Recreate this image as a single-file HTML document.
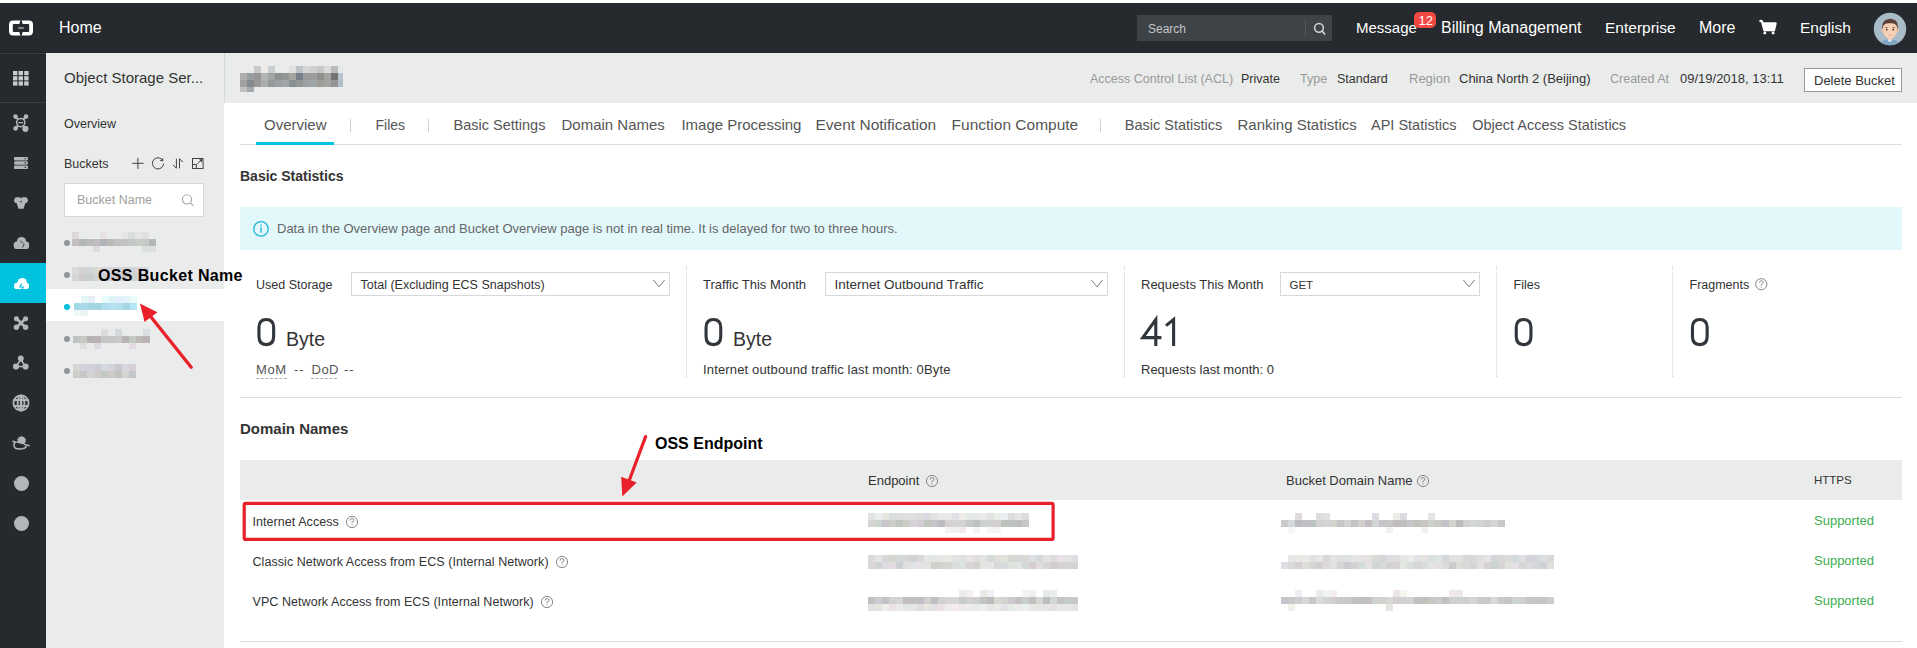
<!DOCTYPE html>
<html><head><meta charset="utf-8"><style>
*{box-sizing:border-box;margin:0;padding:0}
html,body{width:1917px;height:648px;overflow:hidden;background:#fff;font-family:"Liberation Sans",sans-serif;color:#333}
.abs{position:absolute}
.t{position:absolute;white-space:nowrap;line-height:1}
svg{position:absolute;overflow:visible}
</style></head><body>
<div class="abs" style="left:0px;top:3px;width:1917px;height:50px;background:#262a2e;"></div>
<div class="abs" style="left:0px;top:53px;width:46px;height:595px;background:#262a2e;"></div>
<div class="abs" style="left:0px;top:102px;width:46px;height:1px;background:#393e42;"></div>
<div class="abs" style="left:0px;top:53px;width:46px;height:1px;background:#393e42;"></div>
<div class="abs" style="left:0px;top:52px;width:46px;height:1px;background:#212529;"></div>
<div class="abs" style="left:46px;top:53px;width:178px;height:595px;background:#eaeceb;"></div>
<div class="abs" style="left:224px;top:53px;width:1px;height:50px;background:#d5d8d8;"></div>
<div class="abs" style="left:225px;top:53px;width:1692px;height:50px;background:#eaeceb;"></div>
<svg style="left:0;top:0" width="46" height="53"><g fill="#fff">
<path d="M20.4 20.5H13.2Q9 20.5 9 24.7V31.3Q9 35.5 13.2 35.5H20.4L19.3 32H13.6Q12.8 32 12.8 31.2V24.8Q12.8 24 13.6 24H19.3Z"/>
<path d="M21.6 20.5H28.8Q33 20.5 33 24.7V31.3Q33 35.5 28.8 35.5H21.6L22.7 32H28.4Q29.2 32 29.2 31.2V24.8Q29.2 24 28.4 24H22.7Z"/>
</g><rect x="18.2" y="27.1" width="5.6" height="1.8" fill="#8d9296"/></svg>
<div class="t" style="left:59px;top:20px;font-size:16px;color:#fff;">Home</div>
<div class="abs" style="left:1137px;top:15px;width:195px;height:26px;background:#3e4347;"></div>
<div class="abs" style="left:1305px;top:20px;width:1px;height:16px;background:#55595c;"></div>
<div class="t" style="left:1148px;top:23px;font-size:12px;color:#c3c6c8;">Search</div>
<svg style="left:1311px;top:20px" width="16" height="16"><circle cx="8" cy="7.8" r="4.4" fill="none" stroke="#d4d6d8" stroke-width="1.5"/><path d="M11.2 11L13.6 14" stroke="#d4d6d8" stroke-width="1.7" stroke-linecap="round"/></svg>
<div class="t" style="left:1356px;top:20px;font-size:15px;color:#fff;">Message</div>
<div class="abs" style="left:1414px;top:12px;width:22px;height:16px;background:#f14844;border-radius:5px;"></div>
<div class="t" style="left:1418.5px;top:14px;font-size:13px;color:#fff;">12</div>
<div class="t" style="left:1441px;top:20px;font-size:16px;color:#fff;">Billing Management</div>
<div class="t" style="left:1605px;top:20px;font-size:15.5px;color:#fff;">Enterprise</div>
<div class="t" style="left:1699px;top:20px;font-size:16px;color:#fff;">More</div>
<svg style="left:1758px;top:19px" width="20" height="17"><path d="M1.5 1.6L4 2.4L6.4 11.2H16L17.6 4.4H5.2" fill="none" stroke="#fff" stroke-width="2.2" stroke-linejoin="round"/><path d="M5 4.5H17.6L16 10.8H6.5Z" fill="#fff"/><rect x="5.5" y="12.6" width="2.6" height="2.6" fill="#fff"/><rect x="13.8" y="12.6" width="2.6" height="2.6" fill="#fff"/></svg>
<div class="t" style="left:1800px;top:20px;font-size:15.5px;color:#fff;">English</div>
<svg style="left:1873px;top:12px" width="34" height="34" viewBox="0 0 34 34">
<defs><clipPath id="av"><circle cx="17" cy="17" r="16.2"/></clipPath></defs>
<circle cx="17" cy="17" r="16.2" fill="#a7bcc7"/>
<g clip-path="url(#av)">
<path d="M7 34Q8 27.5 17 27Q26 27.5 27 34Z" fill="#7fa5c2"/>
<rect x="14.8" y="23" width="4.4" height="5" fill="#f2c7ad"/>
<path d="M15 27.3L17 28.8L19 27.3V28.6L17 30L15 28.6Z" fill="#fff"/>
<ellipse cx="17" cy="17.5" rx="7.4" ry="9.2" fill="#f5cfb6"/>
<ellipse cx="9.6" cy="18.5" rx="1.3" ry="2" fill="#f0c1a5"/><ellipse cx="24.4" cy="18.5" rx="1.3" ry="2" fill="#f0c1a5"/>
<path d="M9.3 18Q8.6 8.5 14 7.6Q17 6 20.5 7.4Q25.6 8.6 24.7 18L23.6 13.6Q21.5 10.6 17 11.3Q12.5 10.6 10.4 13.6Z" fill="#5b4037"/>
<rect x="13" y="16.8" width="1.4" height="1.7" rx=".6" fill="#3d2b26"/><rect x="19.6" y="16.8" width="1.4" height="1.7" rx=".6" fill="#3d2b26"/>
<path d="M12.2 15.3L14.8 15.9M21.8 15.3L19.2 15.9" stroke="#6a4d42" stroke-width=".8"/>
<path d="M15.8 23.4H18.2" stroke="#d9a48c" stroke-width=".7"/>
</g></svg>
<svg style="left:0;top:53px" width="46" height="50"><rect x="13.0" y="18.0" width="4.4" height="4.2" fill="#c9ccce"/><rect x="18.6" y="18.0" width="4.4" height="4.2" fill="#c9ccce"/><rect x="24.2" y="18.0" width="4.4" height="4.2" fill="#c9ccce"/><rect x="13.0" y="23.2" width="4.4" height="4.2" fill="#c9ccce"/><rect x="18.6" y="23.2" width="4.4" height="4.2" fill="#c9ccce"/><rect x="24.2" y="23.2" width="4.4" height="4.2" fill="#c9ccce"/><rect x="13.0" y="28.4" width="4.4" height="4.2" fill="#c9ccce"/><rect x="18.6" y="28.4" width="4.4" height="4.2" fill="#c9ccce"/><rect x="24.2" y="28.4" width="4.4" height="4.2" fill="#c9ccce"/></svg>
<svg style="left:0;top:103px" width="46" height="40"><g fill="#b3b6b8" stroke="#b3b6b8">
<path d="M15.5 13.5L26 27M26 13.5L16 25" stroke-width="2" fill="none"/>
<circle cx="15.5" cy="13.6" r="2.3" stroke="none"/><circle cx="26" cy="13.6" r="2.3" stroke="none"/><circle cx="15.6" cy="25.4" r="2.3" stroke="none"/><circle cx="25.4" cy="25.8" r="3.1" stroke="none"/>
<circle cx="20.7" cy="19.6" r="4.1" fill="#262a2e" stroke-width="1.5"/><rect x="18.4" y="19" width="4.6" height="1.3" stroke="none"/>
</g></svg>
<svg style="left:0;top:143px" width="46" height="40"><g fill="#b3b6b8">
<rect x="14" y="14" width="14" height="3.4" rx="1"/><rect x="14" y="18.3" width="14" height="3.4" rx="1.6"/><rect x="14" y="22.6" width="14" height="3.4" rx="1"/>
</g><g fill="#262a2e"><rect x="24.5" y="15.2" width="1.6" height="1"/><rect x="24.5" y="19.5" width="1.6" height="1"/><rect x="24.5" y="23.8" width="1.6" height="1"/></g></svg>
<svg style="left:0;top:183px" width="46" height="40"><g fill="#b3b6b8">
<path d="M15.6 14.2H19.6L21 15.3L22.4 14.2H26.4L28.2 17.2L26.8 20H25.4L23.6 25.8H18.4L16.6 20H15.2L13.8 17.2Z"/></g>
<circle cx="21" cy="18.6" r=".8" fill="#262a2e"/></svg>
<svg style="left:0;top:223px" width="46" height="40"><g fill="#b3b6b8">
<circle cx="17.2" cy="22" r="3.6"/><circle cx="21.5" cy="18.6" r="4.6"/><circle cx="25.8" cy="22" r="3.4"/><rect x="14" y="21.5" width="15" height="4.5" rx="2"/>
</g><path d="M20 17.5L24 21.5L22.5 24.5" stroke="#262a2e" stroke-width=".8" fill="none"/></svg>
<div class="abs" style="left:0px;top:263px;width:46px;height:40px;background:#00c1de;"></div>
<svg style="left:0;top:263px" width="46" height="40"><g fill="#fff">
<circle cx="17.5" cy="22.8" r="3.4"/><circle cx="22.2" cy="19.6" r="4.6"/><circle cx="25.8" cy="22.6" r="3.2"/><rect x="14.2" y="22" width="14.8" height="4.1" rx="2"/>
</g><path d="M21.6 20.4L19.8 24H23.4L21.4 27" stroke="#00c1de" stroke-width="1.1" fill="none"/></svg>
<svg style="left:0;top:303px" width="46" height="40"><g fill="#b3b6b8">
<path d="M16.5 15.5L25.5 24.5M25.5 15.5L16.5 24.5" stroke="#b3b6b8" stroke-width="2.6"/>
<circle cx="16.4" cy="15.8" r="2.5"/><circle cx="25.6" cy="15.8" r="2.5"/><circle cx="16.4" cy="24.3" r="2.7"/><circle cx="25.6" cy="24.3" r="2.7"/><rect x="19" y="18" width="4" height="4"/>
</g></svg>
<svg style="left:0;top:343px" width="46" height="40"><g fill="#b3b6b8">
<circle cx="20.8" cy="15.5" r="2.9"/><circle cx="16" cy="23.5" r="3.1"/><circle cx="25.6" cy="23.5" r="3.1"/>
<path d="M20.8 16.5L16.5 23M20.8 16.5L25 23M16 23.5H25.6" stroke="#b3b6b8" stroke-width="1.6"/>
</g><circle cx="20.8" cy="21" r="1.4" fill="#262a2e"/></svg>
<svg style="left:0;top:383px" width="46" height="40"><g fill="none" stroke="#b3b6b8" stroke-width="1.8">
<circle cx="21" cy="20" r="7.6"/><path d="M13.5 17H28.5M13.5 23H28.5"/><ellipse cx="21" cy="20" rx="3.4" ry="7.6"/></g>
<rect x="19.8" y="13" width="2.4" height="14" fill="#b3b6b8"/></svg>
<svg style="left:0;top:423px" width="46" height="40">
<path d="M21.60 12.70L22.74 14.08L24.48 13.64L24.59 15.43L26.26 16.09L25.30 17.60L26.26 19.11L24.59 19.77L24.48 21.56L22.74 21.12L21.60 22.50L20.46 21.12L18.72 21.56L18.61 19.77L16.94 19.11L17.90 17.60L16.94 16.09L18.61 15.43L18.72 13.64L20.46 14.08Z" fill="#b3b6b8"/>
<path d="M12.4 18.3L29.6 22.7" stroke="#b3b6b8" stroke-width="1.5"/>
<path d="M15.4 19.2Q13.4 20.6 14.2 23.4Q15.2 26.2 18.6 25.8Q20.2 26.4 22.2 25.6Q25.6 25.6 26.4 23" fill="none" stroke="#b3b6b8" stroke-width="1.5"/>
<path d="M16 19.6L24.2 21.6L23.5 24.5H17Z" fill="#262a2e"/>
</svg>
<div class="abs" style="left:13.5px;top:475.5px;width:15px;height:15px;border-radius:50%;background:#b3b6b8"></div>
<div class="abs" style="left:13.5px;top:515.5px;width:15px;height:15px;border-radius:50%;background:#b3b6b8"></div>
<div class="t" style="left:64px;top:70px;font-size:15px;color:#333;">Object Storage Ser...</div>
<div class="t" style="left:64px;top:118px;font-size:12.5px;color:#333;">Overview</div>
<div class="t" style="left:64px;top:158px;font-size:12.5px;color:#333;">Buckets</div>
<svg style="left:130px;top:155px" width="80" height="18"><g fill="none" stroke="#444" stroke-width="1">
<path d="M7.9 2.8V13.9M2.2 8.3H13.6"/>
<path d="M31.4 3.9A5.6 5.6 0 1 0 33.6 8.6"/>
<path d="M46.4 3.6V13.2L43 10M49.5 13.3V3.8L53 7"/>
<rect x="62.5" y="3.5" width="10.6" height="10"/><rect x="62.5" y="9.5" width="3.8" height="4"/><path d="M67.3 8.8L71.6 4.8"/>
</g><path d="M29.8 5.9L33.2 2.8V6.3Z" fill="#444"/><path d="M72.4 4L69 4.6L71.8 7.4Z" fill="#444"/></svg>
<div class="abs" style="left:64px;top:183px;width:140px;height:34px;background:#fff;border:1px solid #d9d9d9"></div>
<div class="t" style="left:77px;top:194px;font-size:12.5px;color:#a0a0a0;">Bucket Name</div>
<svg style="left:180px;top:192px" width="16" height="16"><circle cx="7" cy="7.4" r="4.6" fill="none" stroke="#a6a6a6" stroke-width="1.1"/><path d="M10.4 10.8L13.4 13.8" stroke="#a6a6a6" stroke-width="1.2"/></svg>
<div class="abs" style="left:46px;top:289px;width:178px;height:32px;background:#fff;"></div>
<div class="abs" style="left:64px;top:240px;width:6px;height:6px;border-radius:50%;background:#8f9598"></div>
<div class="abs" style="left:64px;top:272px;width:6px;height:6px;border-radius:50%;background:#8f9598"></div>
<div class="abs" style="left:64px;top:304px;width:6px;height:6px;border-radius:50%;background:#00c1de"></div>
<div class="abs" style="left:64px;top:336px;width:6px;height:6px;border-radius:50%;background:#8f9598"></div>
<div class="abs" style="left:64px;top:368px;width:6px;height:6px;border-radius:50%;background:#8f9598"></div>
<div class="abs" style="left:72px;top:232px;width:7px;height:7px;background:rgb(221,215,218)"></div>
<div class="abs" style="left:100px;top:232px;width:7px;height:7px;background:rgb(231,225,224)"></div>
<div class="abs" style="left:121px;top:232px;width:7px;height:7px;background:rgb(231,228,232)"></div>
<div class="abs" style="left:128px;top:232px;width:7px;height:7px;background:rgb(216,220,221)"></div>
<div class="abs" style="left:135px;top:232px;width:7px;height:7px;background:rgb(231,230,229)"></div>
<div class="abs" style="left:142px;top:232px;width:7px;height:7px;background:rgb(222,223,222)"></div>
<div class="abs" style="left:72px;top:239px;width:7px;height:7px;background:rgb(196,190,191)"></div>
<div class="abs" style="left:79px;top:239px;width:7px;height:7px;background:rgb(179,183,179)"></div>
<div class="abs" style="left:86px;top:239px;width:7px;height:7px;background:rgb(189,188,188)"></div>
<div class="abs" style="left:93px;top:239px;width:7px;height:7px;background:rgb(193,188,191)"></div>
<div class="abs" style="left:100px;top:239px;width:7px;height:7px;background:rgb(177,179,184)"></div>
<div class="abs" style="left:107px;top:239px;width:7px;height:7px;background:rgb(184,186,184)"></div>
<div class="abs" style="left:114px;top:239px;width:7px;height:7px;background:rgb(195,193,192)"></div>
<div class="abs" style="left:121px;top:239px;width:7px;height:7px;background:rgb(197,194,196)"></div>
<div class="abs" style="left:128px;top:239px;width:7px;height:7px;background:rgb(195,199,197)"></div>
<div class="abs" style="left:135px;top:239px;width:7px;height:7px;background:rgb(201,204,197)"></div>
<div class="abs" style="left:142px;top:239px;width:7px;height:7px;background:rgb(199,200,200)"></div>
<div class="abs" style="left:149px;top:239px;width:7px;height:7px;background:rgb(178,184,184)"></div>
<div class="abs" style="left:93px;top:246px;width:7px;height:6px;background:rgb(222,218,223)"></div>
<div class="abs" style="left:142px;top:246px;width:7px;height:6px;background:rgb(218,222,224)"></div>
<div class="abs" style="left:149px;top:246px;width:7px;height:6px;background:rgb(223,222,222)"></div>
<div class="abs" style="left:72px;top:267px;width:7px;height:7px;background:rgb(219,220,223)"></div>
<div class="abs" style="left:79px;top:267px;width:7px;height:7px;background:rgb(213,209,206)"></div>
<div class="abs" style="left:86px;top:267px;width:7px;height:7px;background:rgb(209,213,215)"></div>
<div class="abs" style="left:93px;top:267px;width:7px;height:7px;background:rgb(215,217,210)"></div>
<div class="abs" style="left:100px;top:267px;width:7px;height:7px;background:rgb(218,215,218)"></div>
<div class="abs" style="left:107px;top:267px;width:7px;height:7px;background:rgb(216,214,218)"></div>
<div class="abs" style="left:114px;top:267px;width:7px;height:7px;background:rgb(209,210,215)"></div>
<div class="abs" style="left:121px;top:267px;width:7px;height:7px;background:rgb(210,208,208)"></div>
<div class="abs" style="left:128px;top:267px;width:7px;height:7px;background:rgb(212,211,211)"></div>
<div class="abs" style="left:135px;top:267px;width:7px;height:7px;background:rgb(215,213,218)"></div>
<div class="abs" style="left:142px;top:267px;width:7px;height:7px;background:rgb(219,218,219)"></div>
<div class="abs" style="left:72px;top:274px;width:7px;height:7px;background:rgb(216,214,210)"></div>
<div class="abs" style="left:79px;top:274px;width:7px;height:7px;background:rgb(207,203,203)"></div>
<div class="abs" style="left:86px;top:274px;width:7px;height:7px;background:rgb(201,205,204)"></div>
<div class="abs" style="left:93px;top:274px;width:7px;height:7px;background:rgb(209,214,210)"></div>
<div class="abs" style="left:100px;top:274px;width:7px;height:7px;background:rgb(205,204,207)"></div>
<div class="abs" style="left:107px;top:274px;width:7px;height:7px;background:rgb(212,209,214)"></div>
<div class="abs" style="left:114px;top:274px;width:7px;height:7px;background:rgb(205,203,207)"></div>
<div class="abs" style="left:121px;top:274px;width:7px;height:7px;background:rgb(201,202,196)"></div>
<div class="abs" style="left:128px;top:274px;width:7px;height:7px;background:rgb(210,209,210)"></div>
<div class="abs" style="left:135px;top:274px;width:7px;height:7px;background:rgb(205,212,205)"></div>
<div class="abs" style="left:142px;top:274px;width:7px;height:7px;background:rgb(209,210,208)"></div>
<div class="abs" style="left:81px;top:296px;width:7px;height:7px;background:rgb(229,247,245)"></div>
<div class="abs" style="left:88px;top:296px;width:7px;height:7px;background:rgb(231,238,246)"></div>
<div class="abs" style="left:102px;top:296px;width:7px;height:7px;background:rgb(231,253,252)"></div>
<div class="abs" style="left:109px;top:296px;width:7px;height:7px;background:rgb(223,242,246)"></div>
<div class="abs" style="left:116px;top:296px;width:7px;height:7px;background:rgb(226,238,249)"></div>
<div class="abs" style="left:123px;top:296px;width:7px;height:7px;background:rgb(228,243,249)"></div>
<div class="abs" style="left:130px;top:296px;width:7px;height:7px;background:rgb(232,252,250)"></div>
<div class="abs" style="left:74px;top:303px;width:7px;height:7px;background:rgb(165,219,229)"></div>
<div class="abs" style="left:81px;top:303px;width:7px;height:7px;background:rgb(173,215,237)"></div>
<div class="abs" style="left:88px;top:303px;width:7px;height:7px;background:rgb(165,215,225)"></div>
<div class="abs" style="left:95px;top:303px;width:7px;height:7px;background:rgb(164,212,224)"></div>
<div class="abs" style="left:102px;top:303px;width:7px;height:7px;background:rgb(176,221,240)"></div>
<div class="abs" style="left:109px;top:303px;width:7px;height:7px;background:rgb(181,225,240)"></div>
<div class="abs" style="left:116px;top:303px;width:7px;height:7px;background:rgb(179,223,238)"></div>
<div class="abs" style="left:123px;top:303px;width:7px;height:7px;background:rgb(167,214,228)"></div>
<div class="abs" style="left:130px;top:303px;width:7px;height:7px;background:rgb(180,230,245)"></div>
<div class="abs" style="left:74px;top:310px;width:7px;height:6px;background:rgb(240,247,247)"></div>
<div class="abs" style="left:81px;top:310px;width:7px;height:6px;background:rgb(237,245,244)"></div>
<div class="abs" style="left:101px;top:329px;width:7px;height:7px;background:rgb(222,221,219)"></div>
<div class="abs" style="left:115px;top:329px;width:7px;height:7px;background:rgb(212,217,220)"></div>
<div class="abs" style="left:143px;top:329px;width:7px;height:7px;background:rgb(218,222,225)"></div>
<div class="abs" style="left:73px;top:336px;width:7px;height:7px;background:rgb(191,197,193)"></div>
<div class="abs" style="left:80px;top:336px;width:7px;height:7px;background:rgb(201,200,196)"></div>
<div class="abs" style="left:87px;top:336px;width:7px;height:7px;background:rgb(180,177,178)"></div>
<div class="abs" style="left:94px;top:336px;width:7px;height:7px;background:rgb(184,177,182)"></div>
<div class="abs" style="left:101px;top:336px;width:7px;height:7px;background:rgb(196,199,198)"></div>
<div class="abs" style="left:108px;top:336px;width:7px;height:7px;background:rgb(196,199,194)"></div>
<div class="abs" style="left:115px;top:336px;width:7px;height:7px;background:rgb(200,199,202)"></div>
<div class="abs" style="left:122px;top:336px;width:7px;height:7px;background:rgb(185,180,183)"></div>
<div class="abs" style="left:129px;top:336px;width:7px;height:7px;background:rgb(194,200,194)"></div>
<div class="abs" style="left:136px;top:336px;width:7px;height:7px;background:rgb(191,186,184)"></div>
<div class="abs" style="left:143px;top:336px;width:7px;height:7px;background:rgb(185,180,179)"></div>
<div class="abs" style="left:80px;top:343px;width:7px;height:6px;background:rgb(222,222,224)"></div>
<div class="abs" style="left:94px;top:343px;width:7px;height:6px;background:rgb(219,220,226)"></div>
<div class="abs" style="left:129px;top:343px;width:7px;height:6px;background:rgb(226,219,225)"></div>
<div class="abs" style="left:73px;top:364px;width:7px;height:7px;background:rgb(215,214,214)"></div>
<div class="abs" style="left:80px;top:364px;width:7px;height:7px;background:rgb(211,210,216)"></div>
<div class="abs" style="left:87px;top:364px;width:7px;height:7px;background:rgb(209,208,214)"></div>
<div class="abs" style="left:94px;top:364px;width:7px;height:7px;background:rgb(206,205,212)"></div>
<div class="abs" style="left:101px;top:364px;width:7px;height:7px;background:rgb(212,218,219)"></div>
<div class="abs" style="left:108px;top:364px;width:7px;height:7px;background:rgb(212,210,218)"></div>
<div class="abs" style="left:115px;top:364px;width:7px;height:7px;background:rgb(201,201,204)"></div>
<div class="abs" style="left:122px;top:364px;width:7px;height:7px;background:rgb(217,214,221)"></div>
<div class="abs" style="left:129px;top:364px;width:7px;height:7px;background:rgb(212,208,213)"></div>
<div class="abs" style="left:73px;top:371px;width:7px;height:7px;background:rgb(203,206,199)"></div>
<div class="abs" style="left:80px;top:371px;width:7px;height:7px;background:rgb(201,198,200)"></div>
<div class="abs" style="left:87px;top:371px;width:7px;height:7px;background:rgb(210,213,214)"></div>
<div class="abs" style="left:94px;top:371px;width:7px;height:7px;background:rgb(207,203,199)"></div>
<div class="abs" style="left:101px;top:371px;width:7px;height:7px;background:rgb(195,200,195)"></div>
<div class="abs" style="left:108px;top:371px;width:7px;height:7px;background:rgb(207,202,201)"></div>
<div class="abs" style="left:115px;top:371px;width:7px;height:7px;background:rgb(195,195,192)"></div>
<div class="abs" style="left:122px;top:371px;width:7px;height:7px;background:rgb(213,213,213)"></div>
<div class="abs" style="left:129px;top:371px;width:7px;height:7px;background:rgb(197,198,199)"></div>
<div class="abs" style="left:254px;top:66px;width:7px;height:7px;background:#c9c9cc;"></div>
<div class="abs" style="left:261px;top:66px;width:7px;height:7px;background:#ecebe8;"></div>
<div class="abs" style="left:268px;top:66px;width:7px;height:7px;background:#c9ced1;"></div>
<div class="abs" style="left:289px;top:66px;width:7px;height:7px;background:#e2e1e0;"></div>
<div class="abs" style="left:296px;top:66px;width:7px;height:7px;background:#bcc2c5;"></div>
<div class="abs" style="left:303px;top:66px;width:7px;height:7px;background:#d8d7d4;"></div>
<div class="abs" style="left:310px;top:66px;width:7px;height:7px;background:#ccd0d3;"></div>
<div class="abs" style="left:317px;top:66px;width:7px;height:7px;background:#c9c8c6;"></div>
<div class="abs" style="left:324px;top:66px;width:7px;height:7px;background:#d8dcde;"></div>
<div class="abs" style="left:331px;top:66px;width:7px;height:7px;background:#bcbcba;"></div>
<div class="abs" style="left:338px;top:66px;width:5px;height:7px;background:#e6e9ec;"></div>
<div class="abs" style="left:240px;top:73px;width:7px;height:7px;background:#aeadab;"></div>
<div class="abs" style="left:247px;top:73px;width:7px;height:7px;background:#969fa2;"></div>
<div class="abs" style="left:254px;top:73px;width:7px;height:7px;background:#9a9697;"></div>
<div class="abs" style="left:261px;top:73px;width:7px;height:7px;background:#b3b5b2;"></div>
<div class="abs" style="left:268px;top:73px;width:7px;height:7px;background:#a3a6a7;"></div>
<div class="abs" style="left:275px;top:73px;width:7px;height:7px;background:#8e9192;"></div>
<div class="abs" style="left:282px;top:73px;width:7px;height:7px;background:#939697;"></div>
<div class="abs" style="left:289px;top:73px;width:7px;height:7px;background:#a3a5a0;"></div>
<div class="abs" style="left:296px;top:73px;width:7px;height:7px;background:#76808a;"></div>
<div class="abs" style="left:303px;top:73px;width:7px;height:7px;background:#9a9b9d;"></div>
<div class="abs" style="left:310px;top:73px;width:7px;height:7px;background:#9a9d9c;"></div>
<div class="abs" style="left:317px;top:73px;width:7px;height:7px;background:#908f8c;"></div>
<div class="abs" style="left:324px;top:73px;width:7px;height:7px;background:#a2a3a1;"></div>
<div class="abs" style="left:331px;top:73px;width:7px;height:7px;background:#727471;"></div>
<div class="abs" style="left:338px;top:73px;width:5px;height:7px;background:#b8c5ce;"></div>
<div class="abs" style="left:240px;top:80px;width:7px;height:7px;background:#a3a2a1;"></div>
<div class="abs" style="left:247px;top:80px;width:7px;height:7px;background:#828b90;"></div>
<div class="abs" style="left:254px;top:80px;width:7px;height:7px;background:#9e9999;"></div>
<div class="abs" style="left:261px;top:80px;width:7px;height:7px;background:#acaeab;"></div>
<div class="abs" style="left:268px;top:80px;width:7px;height:7px;background:#949899;"></div>
<div class="abs" style="left:275px;top:80px;width:7px;height:7px;background:#9ea1a3;"></div>
<div class="abs" style="left:282px;top:80px;width:7px;height:7px;background:#a3a6a6;"></div>
<div class="abs" style="left:289px;top:80px;width:7px;height:7px;background:#899094;"></div>
<div class="abs" style="left:296px;top:80px;width:7px;height:7px;background:#949899;"></div>
<div class="abs" style="left:303px;top:80px;width:7px;height:7px;background:#9fa2a2;"></div>
<div class="abs" style="left:310px;top:80px;width:7px;height:7px;background:#a0a5a8;"></div>
<div class="abs" style="left:317px;top:80px;width:7px;height:7px;background:#9f9e9b;"></div>
<div class="abs" style="left:324px;top:80px;width:7px;height:7px;background:#a5a4a2;"></div>
<div class="abs" style="left:331px;top:80px;width:7px;height:7px;background:#949594;"></div>
<div class="abs" style="left:338px;top:80px;width:5px;height:7px;background:#afbec8;"></div>
<div class="abs" style="left:240px;top:87px;width:7px;height:5px;background:#c1c1be;"></div>
<div class="abs" style="left:247px;top:87px;width:7px;height:5px;background:#a4a9ad;"></div>
<div class="t" style="left:1090px;top:73px;font-size:12.5px;color:#999;">Access Control List (ACL)</div>
<div class="t" style="left:1241px;top:73px;font-size:12.5px;color:#333;">Private</div>
<div class="t" style="left:1300px;top:73px;font-size:12.5px;color:#999;">Type</div>
<div class="t" style="left:1337px;top:73px;font-size:12.5px;color:#333;">Standard</div>
<div class="t" style="left:1409px;top:72px;font-size:13px;color:#999;">Region</div>
<div class="t" style="left:1459px;top:72px;font-size:13px;color:#333;">China North 2 (Beijing)</div>
<div class="t" style="left:1610px;top:73px;font-size:12.5px;color:#999;">Created At</div>
<div class="t" style="left:1680px;top:72px;font-size:13px;color:#333;">09/19/2018, 13:11</div>
<div class="abs" style="left:1804px;top:68px;width:98px;height:24px;background:#fff;border:1px solid #999"></div>
<div class="t" style="left:1814px;top:74px;font-size:13px;color:#333;">Delete Bucket</div>
<div class="abs" style="left:240px;top:144px;width:1662px;height:1px;background:#dcdcdc;"></div>
<div class="abs" style="left:256px;top:142px;width:78px;height:3px;background:#00c1de;"></div>
<div class="t" style="left:264px;top:117px;font-size:15px;color:#555;">Overview</div>
<div class="abs" style="left:350px;top:119px;width:1px;height:13px;background:#d0d0d0;"></div>
<div class="t" style="left:375.5px;top:118px;font-size:14px;color:#555;">Files</div>
<div class="abs" style="left:428px;top:119px;width:1px;height:13px;background:#d0d0d0;"></div>
<div class="t" style="left:453.5px;top:118px;font-size:14.5px;color:#555;">Basic Settings</div>
<div class="t" style="left:561.5px;top:117px;font-size:15px;color:#555;">Domain Names</div>
<div class="t" style="left:681.4px;top:117px;font-size:15px;color:#555;">Image Processing</div>
<div class="t" style="left:815.5px;top:117px;font-size:15.5px;color:#555;">Event Notification</div>
<div class="t" style="left:951.6px;top:117px;font-size:15.5px;color:#555;">Function Compute</div>
<div class="abs" style="left:1100px;top:119px;width:1px;height:13px;background:#d0d0d0;"></div>
<div class="t" style="left:1124.8px;top:118px;font-size:14.5px;color:#555;">Basic Statistics</div>
<div class="t" style="left:1237.5px;top:117px;font-size:15px;color:#555;">Ranking Statistics</div>
<div class="t" style="left:1371px;top:118px;font-size:14.5px;color:#555;">API Statistics</div>
<div class="t" style="left:1472.2px;top:118px;font-size:14.5px;color:#555;">Object Access Statistics</div>
<div class="t" style="left:240px;top:169px;font-size:14px;color:#333;font-weight:bold;">Basic Statistics</div>
<div class="abs" style="left:240px;top:207px;width:1662px;height:43px;background:#e3f8fb;"></div>
<svg style="left:252px;top:220px" width="18" height="18"><circle cx="9" cy="8.9" r="7.2" fill="none" stroke="#1fb3dc" stroke-width="1.3"/><rect x="8.3" y="7.3" width="1.4" height="5.3" fill="#1fb3dc"/><rect x="8.3" y="4.6" width="1.4" height="1.5" fill="#1fb3dc"/></svg>
<div class="t" style="left:277px;top:222px;font-size:13px;color:#666;">Data in the Overview page and Bucket Overview page is not in real time. It is delayed for two to three hours.</div>
<div class="t" style="left:256px;top:279px;font-size:12.5px;color:#333;">Used Storage</div>
<div class="abs" style="left:351px;top:272px;width:319px;height:24px;background:#fff;border:1px solid #d6d9db"></div>
<div class="t" style="left:360.5px;top:279px;font-size:12.5px;color:#333;">Total (Excluding ECS Snapshots)</div>
<svg style="left:651px;top:279px" width="16" height="10"><path d="M2.4 1L8 7.8L13.6 1" fill="none" stroke="#7a7a7a" stroke-width="1"/></svg>
<svg style="left:0;top:0" width="1917" height="648"><path d="M258.95 327.60C258.95 321.50 261.90 319.55 266.30 319.55C270.70 319.55 273.65 321.50 273.65 327.60V336.60C273.65 342.70 270.70 344.65 266.30 344.65C261.90 344.65 258.95 342.70 258.95 336.60Z" fill="none" stroke="#30363b" stroke-width="3.1"/></svg>
<div class="t" style="left:286px;top:330px;font-size:19.5px;color:#333;">Byte</div>
<div class="t" style="left:256px;top:363px;font-size:13px;color:#555;letter-spacing:.6px;">MoM</div>
<div class="abs" style="left:256px;top:378px;width:31px;height:0;border-top:1px dashed #b0b0b0"></div>
<div class="t" style="left:294px;top:363px;font-size:13px;color:#555;letter-spacing:1px;">--</div>
<div class="t" style="left:311.5px;top:363px;font-size:13px;color:#555;letter-spacing:.5px;">DoD</div>
<div class="abs" style="left:311px;top:378px;width:26px;height:0;border-top:1px dashed #b0b0b0"></div>
<div class="t" style="left:344px;top:363px;font-size:13px;color:#555;letter-spacing:1px;">--</div>
<div class="abs" style="left:686px;top:266px;width:0;height:111px;border-left:1px dotted #d2d2d2"></div>
<div class="t" style="left:703px;top:278px;font-size:13px;color:#333;">Traffic This Month</div>
<div class="abs" style="left:825px;top:272px;width:283px;height:24px;background:#fff;border:1px solid #d6d9db"></div>
<div class="t" style="left:834.5px;top:278px;font-size:13.5px;color:#333;">Internet Outbound Traffic</div>
<svg style="left:1089px;top:279px" width="16" height="10"><path d="M2.4 1L8 7.8L13.6 1" fill="none" stroke="#7a7a7a" stroke-width="1"/></svg>
<svg style="left:0;top:0" width="1917" height="648"><path d="M706.05 327.60C706.05 321.50 709.00 319.55 713.40 319.55C717.80 319.55 720.75 321.50 720.75 327.60V336.60C720.75 342.70 717.80 344.65 713.40 344.65C709.00 344.65 706.05 342.70 706.05 336.60Z" fill="none" stroke="#30363b" stroke-width="3.1"/></svg>
<div class="t" style="left:733px;top:330px;font-size:19.5px;color:#333;">Byte</div>
<div class="t" style="left:703px;top:363px;font-size:13px;color:#333;letter-spacing:.15px;">Internet outbound traffic last month: 0Byte</div>
<div class="abs" style="left:1124px;top:266px;width:0;height:111px;border-left:1px dotted #d2d2d2"></div>
<div class="t" style="left:1141px;top:278px;font-size:13px;color:#333;">Requests This Month</div>
<div class="abs" style="left:1280px;top:272px;width:200px;height:24px;background:#fff;border:1px solid #d6d9db"></div>
<div class="t" style="left:1289.5px;top:280px;font-size:11.5px;color:#333;">GET</div>
<svg style="left:1461px;top:279px" width="16" height="10"><path d="M2.4 1L8 7.8L13.6 1" fill="none" stroke="#7a7a7a" stroke-width="1"/></svg>
<svg style="left:0;top:0" width="1917" height="648"><g fill="none" stroke="#30363b" stroke-width="3.1"><path d="M1155.8 346V319.5L1142.8 337.6H1161.4"/><path d="M1173.6 346V319.5L1166 325.6"/></g></svg>
<div class="t" style="left:1141px;top:363px;font-size:13px;color:#333;">Requests last month: 0</div>
<div class="abs" style="left:1496px;top:266px;width:0;height:111px;border-left:1px dotted #d2d2d2"></div>
<div class="t" style="left:1513.5px;top:279px;font-size:12.5px;color:#333;">Files</div>
<svg style="left:0;top:0" width="1917" height="648"><path d="M1516.25 327.60C1516.25 321.50 1519.20 319.55 1523.60 319.55C1528.00 319.55 1530.95 321.50 1530.95 327.60V336.60C1530.95 342.70 1528.00 344.65 1523.60 344.65C1519.20 344.65 1516.25 342.70 1516.25 336.60Z" fill="none" stroke="#30363b" stroke-width="3.1"/></svg>
<div class="abs" style="left:1672px;top:266px;width:0;height:111px;border-left:1px dotted #d2d2d2"></div>
<div class="t" style="left:1689.5px;top:279px;font-size:12.5px;color:#333;">Fragments</div>
<svg style="left:1754px;top:277px" width="14" height="14"><circle cx="7.3" cy="7.2" r="5.6" fill="none" stroke="#888" stroke-width="1"/><path d="M5.4 5.7Q5.5 3.8 7.3 3.8Q9.2 3.8 9.2 5.5Q9.2 6.7 7.3 7.4V8.6" fill="none" stroke="#888" stroke-width="1"/><rect x="6.8" y="9.6" width="1" height="1.1" fill="#888"/></svg>
<svg style="left:0;top:0" width="1917" height="648"><path d="M1692.45 327.60C1692.45 321.50 1695.40 319.55 1699.80 319.55C1704.20 319.55 1707.15 321.50 1707.15 327.60V336.60C1707.15 342.70 1704.20 344.65 1699.80 344.65C1695.40 344.65 1692.45 342.70 1692.45 336.60Z" fill="none" stroke="#30363b" stroke-width="3.1"/></svg>
<div class="abs" style="left:240px;top:397px;width:1662px;height:1px;background:#dcdcdc;"></div>
<div class="t" style="left:240px;top:421px;font-size:15px;color:#333;font-weight:bold;">Domain Names</div>
<div class="abs" style="left:240px;top:460px;width:1662px;height:40px;background:#eaeceb;"></div>
<div class="t" style="left:868px;top:474px;font-size:13px;color:#333;">Endpoint</div>
<svg style="left:925px;top:473.5px" width="14" height="14"><circle cx="7" cy="7" r="5.6" fill="none" stroke="#888" stroke-width="1"/><path d="M5.1 5.5Q5.2 3.6 7 3.6Q8.9 3.6 8.9 5.3Q8.9 6.5 7 7.2V8.4" fill="none" stroke="#888" stroke-width="1"/><rect x="6.5" y="9.4" width="1" height="1.1" fill="#888"/></svg>
<div class="t" style="left:1286px;top:474px;font-size:13px;color:#333;">Bucket Domain Name</div>
<svg style="left:1416px;top:473.5px" width="14" height="14"><circle cx="7" cy="7" r="5.6" fill="none" stroke="#888" stroke-width="1"/><path d="M5.1 5.5Q5.2 3.6 7 3.6Q8.9 3.6 8.9 5.3Q8.9 6.5 7 7.2V8.4" fill="none" stroke="#888" stroke-width="1"/><rect x="6.5" y="9.4" width="1" height="1.1" fill="#888"/></svg>
<div class="t" style="left:1814px;top:475px;font-size:11.5px;color:#333;">HTTPS</div>
<div class="t" style="left:252.5px;top:516px;font-size:12.5px;color:#333;letter-spacing:.06px;">Internet Access</div>
<svg style="left:345px;top:514.6px" width="14" height="14"><circle cx="7" cy="7" r="5.6" fill="none" stroke="#888" stroke-width="1"/><path d="M5.1 5.5Q5.2 3.6 7 3.6Q8.9 3.6 8.9 5.3Q8.9 6.5 7 7.2V8.4" fill="none" stroke="#888" stroke-width="1"/><rect x="6.5" y="9.4" width="1" height="1.1" fill="#888"/></svg>
<div class="t" style="left:1814px;top:514px;font-size:13px;color:#3dae4e;">Supported</div>
<div class="t" style="left:252.5px;top:556px;font-size:12.5px;color:#333;letter-spacing:.06px;">Classic Network Access from ECS (Internal Network)</div>
<svg style="left:555px;top:554.6px" width="14" height="14"><circle cx="7" cy="7" r="5.6" fill="none" stroke="#888" stroke-width="1"/><path d="M5.1 5.5Q5.2 3.6 7 3.6Q8.9 3.6 8.9 5.3Q8.9 6.5 7 7.2V8.4" fill="none" stroke="#888" stroke-width="1"/><rect x="6.5" y="9.4" width="1" height="1.1" fill="#888"/></svg>
<div class="t" style="left:1814px;top:554px;font-size:13px;color:#3dae4e;">Supported</div>
<div class="t" style="left:252.5px;top:596px;font-size:12.5px;color:#333;letter-spacing:.06px;">VPC Network Access from ECS (Internal Network)</div>
<svg style="left:540px;top:594.6px" width="14" height="14"><circle cx="7" cy="7" r="5.6" fill="none" stroke="#888" stroke-width="1"/><path d="M5.1 5.5Q5.2 3.6 7 3.6Q8.9 3.6 8.9 5.3Q8.9 6.5 7 7.2V8.4" fill="none" stroke="#888" stroke-width="1"/><rect x="6.5" y="9.4" width="1" height="1.1" fill="#888"/></svg>
<div class="t" style="left:1814px;top:594px;font-size:13px;color:#3dae4e;">Supported</div>
<div class="abs" style="left:868px;top:513px;width:7px;height:7px;background:rgb(227,227,225)"></div>
<div class="abs" style="left:875px;top:513px;width:7px;height:7px;background:rgb(234,238,239)"></div>
<div class="abs" style="left:882px;top:513px;width:7px;height:7px;background:rgb(229,229,224)"></div>
<div class="abs" style="left:889px;top:513px;width:7px;height:7px;background:rgb(216,221,222)"></div>
<div class="abs" style="left:896px;top:513px;width:7px;height:7px;background:rgb(220,221,221)"></div>
<div class="abs" style="left:903px;top:513px;width:7px;height:7px;background:rgb(223,223,224)"></div>
<div class="abs" style="left:910px;top:513px;width:7px;height:7px;background:rgb(222,225,224)"></div>
<div class="abs" style="left:917px;top:513px;width:7px;height:7px;background:rgb(224,219,221)"></div>
<div class="abs" style="left:924px;top:513px;width:7px;height:7px;background:rgb(219,218,225)"></div>
<div class="abs" style="left:931px;top:513px;width:7px;height:7px;background:rgb(229,226,227)"></div>
<div class="abs" style="left:938px;top:513px;width:7px;height:7px;background:rgb(233,233,231)"></div>
<div class="abs" style="left:945px;top:513px;width:7px;height:7px;background:rgb(234,232,234)"></div>
<div class="abs" style="left:952px;top:513px;width:7px;height:7px;background:rgb(223,223,230)"></div>
<div class="abs" style="left:959px;top:513px;width:7px;height:7px;background:rgb(239,237,234)"></div>
<div class="abs" style="left:966px;top:513px;width:7px;height:7px;background:rgb(228,234,232)"></div>
<div class="abs" style="left:973px;top:513px;width:7px;height:7px;background:rgb(230,232,233)"></div>
<div class="abs" style="left:980px;top:513px;width:7px;height:7px;background:rgb(233,235,234)"></div>
<div class="abs" style="left:987px;top:513px;width:7px;height:7px;background:rgb(224,225,226)"></div>
<div class="abs" style="left:994px;top:513px;width:7px;height:7px;background:rgb(231,238,232)"></div>
<div class="abs" style="left:1001px;top:513px;width:7px;height:7px;background:rgb(235,237,240)"></div>
<div class="abs" style="left:1008px;top:513px;width:7px;height:7px;background:rgb(221,221,224)"></div>
<div class="abs" style="left:1015px;top:513px;width:7px;height:7px;background:rgb(231,230,229)"></div>
<div class="abs" style="left:1022px;top:513px;width:7px;height:7px;background:rgb(221,220,221)"></div>
<div class="abs" style="left:868px;top:520px;width:7px;height:7px;background:rgb(214,213,210)"></div>
<div class="abs" style="left:875px;top:520px;width:7px;height:7px;background:rgb(205,213,208)"></div>
<div class="abs" style="left:882px;top:520px;width:7px;height:7px;background:rgb(199,197,202)"></div>
<div class="abs" style="left:889px;top:520px;width:7px;height:7px;background:rgb(207,205,202)"></div>
<div class="abs" style="left:896px;top:520px;width:7px;height:7px;background:rgb(193,199,192)"></div>
<div class="abs" style="left:903px;top:520px;width:7px;height:7px;background:rgb(204,205,198)"></div>
<div class="abs" style="left:910px;top:520px;width:7px;height:7px;background:rgb(214,210,214)"></div>
<div class="abs" style="left:917px;top:520px;width:7px;height:7px;background:rgb(209,205,211)"></div>
<div class="abs" style="left:924px;top:520px;width:7px;height:7px;background:rgb(193,197,192)"></div>
<div class="abs" style="left:931px;top:520px;width:7px;height:7px;background:rgb(196,196,201)"></div>
<div class="abs" style="left:938px;top:520px;width:7px;height:7px;background:rgb(189,187,193)"></div>
<div class="abs" style="left:945px;top:520px;width:7px;height:7px;background:rgb(214,207,210)"></div>
<div class="abs" style="left:952px;top:520px;width:7px;height:7px;background:rgb(215,212,215)"></div>
<div class="abs" style="left:959px;top:520px;width:7px;height:7px;background:rgb(209,210,210)"></div>
<div class="abs" style="left:966px;top:520px;width:7px;height:7px;background:rgb(195,201,197)"></div>
<div class="abs" style="left:973px;top:520px;width:7px;height:7px;background:rgb(188,194,190)"></div>
<div class="abs" style="left:980px;top:520px;width:7px;height:7px;background:rgb(206,210,211)"></div>
<div class="abs" style="left:987px;top:520px;width:7px;height:7px;background:rgb(207,210,208)"></div>
<div class="abs" style="left:994px;top:520px;width:7px;height:7px;background:rgb(211,207,207)"></div>
<div class="abs" style="left:1001px;top:520px;width:7px;height:7px;background:rgb(189,194,189)"></div>
<div class="abs" style="left:1008px;top:520px;width:7px;height:7px;background:rgb(189,196,191)"></div>
<div class="abs" style="left:1015px;top:520px;width:7px;height:7px;background:rgb(187,190,188)"></div>
<div class="abs" style="left:1022px;top:520px;width:7px;height:7px;background:rgb(201,198,199)"></div>
<div class="abs" style="left:945px;top:527px;width:7px;height:6px;background:rgb(244,243,243)"></div>
<div class="abs" style="left:952px;top:527px;width:7px;height:6px;background:rgb(242,239,244)"></div>
<div class="abs" style="left:959px;top:527px;width:7px;height:6px;background:rgb(242,234,234)"></div>
<div class="abs" style="left:973px;top:527px;width:7px;height:6px;background:rgb(247,241,246)"></div>
<div class="abs" style="left:987px;top:527px;width:7px;height:6px;background:rgb(245,246,247)"></div>
<div class="abs" style="left:994px;top:527px;width:7px;height:6px;background:rgb(248,243,246)"></div>
<div class="abs" style="left:868px;top:555px;width:7px;height:7px;background:rgb(218,217,221)"></div>
<div class="abs" style="left:875px;top:555px;width:7px;height:7px;background:rgb(227,229,226)"></div>
<div class="abs" style="left:882px;top:555px;width:7px;height:7px;background:rgb(215,216,219)"></div>
<div class="abs" style="left:889px;top:555px;width:7px;height:7px;background:rgb(211,215,208)"></div>
<div class="abs" style="left:896px;top:555px;width:7px;height:7px;background:rgb(212,218,217)"></div>
<div class="abs" style="left:903px;top:555px;width:7px;height:7px;background:rgb(216,214,213)"></div>
<div class="abs" style="left:910px;top:555px;width:7px;height:7px;background:rgb(212,209,214)"></div>
<div class="abs" style="left:917px;top:555px;width:7px;height:7px;background:rgb(216,218,218)"></div>
<div class="abs" style="left:924px;top:555px;width:7px;height:7px;background:rgb(230,231,227)"></div>
<div class="abs" style="left:931px;top:555px;width:7px;height:7px;background:rgb(225,230,230)"></div>
<div class="abs" style="left:938px;top:555px;width:7px;height:7px;background:rgb(230,230,230)"></div>
<div class="abs" style="left:945px;top:555px;width:7px;height:7px;background:rgb(230,233,228)"></div>
<div class="abs" style="left:952px;top:555px;width:7px;height:7px;background:rgb(227,227,227)"></div>
<div class="abs" style="left:959px;top:555px;width:7px;height:7px;background:rgb(221,225,225)"></div>
<div class="abs" style="left:966px;top:555px;width:7px;height:7px;background:rgb(231,227,231)"></div>
<div class="abs" style="left:973px;top:555px;width:7px;height:7px;background:rgb(225,221,224)"></div>
<div class="abs" style="left:980px;top:555px;width:7px;height:7px;background:rgb(228,229,227)"></div>
<div class="abs" style="left:987px;top:555px;width:7px;height:7px;background:rgb(212,218,214)"></div>
<div class="abs" style="left:994px;top:555px;width:7px;height:7px;background:rgb(226,220,219)"></div>
<div class="abs" style="left:1001px;top:555px;width:7px;height:7px;background:rgb(222,227,220)"></div>
<div class="abs" style="left:1008px;top:555px;width:7px;height:7px;background:rgb(215,215,209)"></div>
<div class="abs" style="left:1015px;top:555px;width:7px;height:7px;background:rgb(216,213,216)"></div>
<div class="abs" style="left:1022px;top:555px;width:7px;height:7px;background:rgb(217,216,210)"></div>
<div class="abs" style="left:1029px;top:555px;width:7px;height:7px;background:rgb(219,225,226)"></div>
<div class="abs" style="left:1036px;top:555px;width:7px;height:7px;background:rgb(214,215,218)"></div>
<div class="abs" style="left:1043px;top:555px;width:7px;height:7px;background:rgb(230,225,229)"></div>
<div class="abs" style="left:1050px;top:555px;width:7px;height:7px;background:rgb(220,218,218)"></div>
<div class="abs" style="left:1057px;top:555px;width:7px;height:7px;background:rgb(233,227,233)"></div>
<div class="abs" style="left:1064px;top:555px;width:7px;height:7px;background:rgb(228,229,226)"></div>
<div class="abs" style="left:1071px;top:555px;width:7px;height:7px;background:rgb(223,221,228)"></div>
<div class="abs" style="left:868px;top:562px;width:7px;height:7px;background:rgb(218,214,218)"></div>
<div class="abs" style="left:875px;top:562px;width:7px;height:7px;background:rgb(207,212,208)"></div>
<div class="abs" style="left:882px;top:562px;width:7px;height:7px;background:rgb(221,219,223)"></div>
<div class="abs" style="left:889px;top:562px;width:7px;height:7px;background:rgb(229,221,225)"></div>
<div class="abs" style="left:896px;top:562px;width:7px;height:7px;background:rgb(205,207,210)"></div>
<div class="abs" style="left:903px;top:562px;width:7px;height:7px;background:rgb(225,222,221)"></div>
<div class="abs" style="left:910px;top:562px;width:7px;height:7px;background:rgb(224,228,231)"></div>
<div class="abs" style="left:917px;top:562px;width:7px;height:7px;background:rgb(232,225,227)"></div>
<div class="abs" style="left:924px;top:562px;width:7px;height:7px;background:rgb(226,226,223)"></div>
<div class="abs" style="left:931px;top:562px;width:7px;height:7px;background:rgb(207,208,202)"></div>
<div class="abs" style="left:938px;top:562px;width:7px;height:7px;background:rgb(212,209,206)"></div>
<div class="abs" style="left:945px;top:562px;width:7px;height:7px;background:rgb(214,213,208)"></div>
<div class="abs" style="left:952px;top:562px;width:7px;height:7px;background:rgb(219,222,223)"></div>
<div class="abs" style="left:959px;top:562px;width:7px;height:7px;background:rgb(221,227,227)"></div>
<div class="abs" style="left:966px;top:562px;width:7px;height:7px;background:rgb(215,212,214)"></div>
<div class="abs" style="left:973px;top:562px;width:7px;height:7px;background:rgb(210,209,203)"></div>
<div class="abs" style="left:980px;top:562px;width:7px;height:7px;background:rgb(230,229,227)"></div>
<div class="abs" style="left:987px;top:562px;width:7px;height:7px;background:rgb(228,229,228)"></div>
<div class="abs" style="left:994px;top:562px;width:7px;height:7px;background:rgb(215,216,213)"></div>
<div class="abs" style="left:1001px;top:562px;width:7px;height:7px;background:rgb(214,220,221)"></div>
<div class="abs" style="left:1008px;top:562px;width:7px;height:7px;background:rgb(223,227,223)"></div>
<div class="abs" style="left:1015px;top:562px;width:7px;height:7px;background:rgb(225,230,227)"></div>
<div class="abs" style="left:1022px;top:562px;width:7px;height:7px;background:rgb(212,218,215)"></div>
<div class="abs" style="left:1029px;top:562px;width:7px;height:7px;background:rgb(212,206,209)"></div>
<div class="abs" style="left:1036px;top:562px;width:7px;height:7px;background:rgb(227,220,220)"></div>
<div class="abs" style="left:1043px;top:562px;width:7px;height:7px;background:rgb(211,213,217)"></div>
<div class="abs" style="left:1050px;top:562px;width:7px;height:7px;background:rgb(209,204,207)"></div>
<div class="abs" style="left:1057px;top:562px;width:7px;height:7px;background:rgb(213,210,209)"></div>
<div class="abs" style="left:1064px;top:562px;width:7px;height:7px;background:rgb(215,213,212)"></div>
<div class="abs" style="left:1071px;top:562px;width:7px;height:7px;background:rgb(212,213,211)"></div>
<div class="abs" style="left:959px;top:590px;width:7px;height:7px;background:rgb(234,237,238)"></div>
<div class="abs" style="left:966px;top:590px;width:7px;height:7px;background:rgb(245,238,242)"></div>
<div class="abs" style="left:980px;top:590px;width:7px;height:7px;background:rgb(232,234,229)"></div>
<div class="abs" style="left:987px;top:590px;width:7px;height:7px;background:rgb(238,240,245)"></div>
<div class="abs" style="left:1022px;top:590px;width:7px;height:7px;background:rgb(245,242,248)"></div>
<div class="abs" style="left:1029px;top:590px;width:7px;height:7px;background:rgb(241,240,241)"></div>
<div class="abs" style="left:1043px;top:590px;width:7px;height:7px;background:rgb(230,234,235)"></div>
<div class="abs" style="left:1050px;top:590px;width:7px;height:7px;background:rgb(236,235,240)"></div>
<div class="abs" style="left:868px;top:597px;width:7px;height:7px;background:rgb(189,194,189)"></div>
<div class="abs" style="left:875px;top:597px;width:7px;height:7px;background:rgb(204,202,210)"></div>
<div class="abs" style="left:882px;top:597px;width:7px;height:7px;background:rgb(192,194,197)"></div>
<div class="abs" style="left:889px;top:597px;width:7px;height:7px;background:rgb(210,209,210)"></div>
<div class="abs" style="left:896px;top:597px;width:7px;height:7px;background:rgb(213,212,212)"></div>
<div class="abs" style="left:903px;top:597px;width:7px;height:7px;background:rgb(194,191,189)"></div>
<div class="abs" style="left:910px;top:597px;width:7px;height:7px;background:rgb(193,193,194)"></div>
<div class="abs" style="left:917px;top:597px;width:7px;height:7px;background:rgb(193,189,192)"></div>
<div class="abs" style="left:924px;top:597px;width:7px;height:7px;background:rgb(210,206,207)"></div>
<div class="abs" style="left:931px;top:597px;width:7px;height:7px;background:rgb(190,192,191)"></div>
<div class="abs" style="left:938px;top:597px;width:7px;height:7px;background:rgb(208,209,208)"></div>
<div class="abs" style="left:945px;top:597px;width:7px;height:7px;background:rgb(215,213,212)"></div>
<div class="abs" style="left:952px;top:597px;width:7px;height:7px;background:rgb(214,214,213)"></div>
<div class="abs" style="left:959px;top:597px;width:7px;height:7px;background:rgb(201,202,204)"></div>
<div class="abs" style="left:966px;top:597px;width:7px;height:7px;background:rgb(208,208,207)"></div>
<div class="abs" style="left:973px;top:597px;width:7px;height:7px;background:rgb(206,205,208)"></div>
<div class="abs" style="left:980px;top:597px;width:7px;height:7px;background:rgb(193,195,194)"></div>
<div class="abs" style="left:987px;top:597px;width:7px;height:7px;background:rgb(189,186,188)"></div>
<div class="abs" style="left:994px;top:597px;width:7px;height:7px;background:rgb(213,217,210)"></div>
<div class="abs" style="left:1001px;top:597px;width:7px;height:7px;background:rgb(213,209,209)"></div>
<div class="abs" style="left:1008px;top:597px;width:7px;height:7px;background:rgb(204,202,206)"></div>
<div class="abs" style="left:1015px;top:597px;width:7px;height:7px;background:rgb(196,192,192)"></div>
<div class="abs" style="left:1022px;top:597px;width:7px;height:7px;background:rgb(201,207,204)"></div>
<div class="abs" style="left:1029px;top:597px;width:7px;height:7px;background:rgb(194,191,191)"></div>
<div class="abs" style="left:1036px;top:597px;width:7px;height:7px;background:rgb(211,216,210)"></div>
<div class="abs" style="left:1043px;top:597px;width:7px;height:7px;background:rgb(189,188,193)"></div>
<div class="abs" style="left:1050px;top:597px;width:7px;height:7px;background:rgb(210,216,211)"></div>
<div class="abs" style="left:1057px;top:597px;width:7px;height:7px;background:rgb(195,195,195)"></div>
<div class="abs" style="left:1064px;top:597px;width:7px;height:7px;background:rgb(195,202,199)"></div>
<div class="abs" style="left:1071px;top:597px;width:7px;height:7px;background:rgb(201,201,201)"></div>
<div class="abs" style="left:868px;top:604px;width:7px;height:7px;background:rgb(224,226,228)"></div>
<div class="abs" style="left:875px;top:604px;width:7px;height:7px;background:rgb(230,226,222)"></div>
<div class="abs" style="left:882px;top:604px;width:7px;height:7px;background:rgb(240,237,238)"></div>
<div class="abs" style="left:889px;top:604px;width:7px;height:7px;background:rgb(234,227,230)"></div>
<div class="abs" style="left:896px;top:604px;width:7px;height:7px;background:rgb(236,234,237)"></div>
<div class="abs" style="left:903px;top:604px;width:7px;height:7px;background:rgb(226,229,227)"></div>
<div class="abs" style="left:910px;top:604px;width:7px;height:7px;background:rgb(228,231,232)"></div>
<div class="abs" style="left:917px;top:604px;width:7px;height:7px;background:rgb(226,223,224)"></div>
<div class="abs" style="left:924px;top:604px;width:7px;height:7px;background:rgb(230,232,224)"></div>
<div class="abs" style="left:931px;top:604px;width:7px;height:7px;background:rgb(226,225,229)"></div>
<div class="abs" style="left:938px;top:604px;width:7px;height:7px;background:rgb(234,226,227)"></div>
<div class="abs" style="left:945px;top:604px;width:7px;height:7px;background:rgb(240,236,236)"></div>
<div class="abs" style="left:952px;top:604px;width:7px;height:7px;background:rgb(243,235,236)"></div>
<div class="abs" style="left:959px;top:604px;width:7px;height:7px;background:rgb(240,233,234)"></div>
<div class="abs" style="left:966px;top:604px;width:7px;height:7px;background:rgb(235,237,235)"></div>
<div class="abs" style="left:973px;top:604px;width:7px;height:7px;background:rgb(231,235,233)"></div>
<div class="abs" style="left:980px;top:604px;width:7px;height:7px;background:rgb(235,239,238)"></div>
<div class="abs" style="left:987px;top:604px;width:7px;height:7px;background:rgb(231,230,231)"></div>
<div class="abs" style="left:994px;top:604px;width:7px;height:7px;background:rgb(234,234,234)"></div>
<div class="abs" style="left:1001px;top:604px;width:7px;height:7px;background:rgb(227,226,233)"></div>
<div class="abs" style="left:1008px;top:604px;width:7px;height:7px;background:rgb(229,235,229)"></div>
<div class="abs" style="left:1015px;top:604px;width:7px;height:7px;background:rgb(234,237,233)"></div>
<div class="abs" style="left:1022px;top:604px;width:7px;height:7px;background:rgb(236,242,237)"></div>
<div class="abs" style="left:1029px;top:604px;width:7px;height:7px;background:rgb(233,232,229)"></div>
<div class="abs" style="left:1036px;top:604px;width:7px;height:7px;background:rgb(230,229,225)"></div>
<div class="abs" style="left:1043px;top:604px;width:7px;height:7px;background:rgb(229,231,228)"></div>
<div class="abs" style="left:1050px;top:604px;width:7px;height:7px;background:rgb(230,224,229)"></div>
<div class="abs" style="left:1057px;top:604px;width:7px;height:7px;background:rgb(232,232,234)"></div>
<div class="abs" style="left:1064px;top:604px;width:7px;height:7px;background:rgb(232,233,231)"></div>
<div class="abs" style="left:1071px;top:604px;width:7px;height:7px;background:rgb(225,227,229)"></div>
<div class="abs" style="left:1295px;top:513px;width:7px;height:7px;background:rgb(223,217,222)"></div>
<div class="abs" style="left:1316px;top:513px;width:7px;height:7px;background:rgb(220,222,221)"></div>
<div class="abs" style="left:1323px;top:513px;width:7px;height:7px;background:rgb(225,225,223)"></div>
<div class="abs" style="left:1372px;top:513px;width:7px;height:7px;background:rgb(219,220,225)"></div>
<div class="abs" style="left:1393px;top:513px;width:7px;height:7px;background:rgb(238,236,233)"></div>
<div class="abs" style="left:1400px;top:513px;width:7px;height:7px;background:rgb(219,218,224)"></div>
<div class="abs" style="left:1428px;top:513px;width:7px;height:7px;background:rgb(229,229,231)"></div>
<div class="abs" style="left:1281px;top:520px;width:7px;height:7px;background:rgb(203,201,201)"></div>
<div class="abs" style="left:1288px;top:520px;width:7px;height:7px;background:rgb(212,215,217)"></div>
<div class="abs" style="left:1295px;top:520px;width:7px;height:7px;background:rgb(187,189,192)"></div>
<div class="abs" style="left:1302px;top:520px;width:7px;height:7px;background:rgb(193,192,196)"></div>
<div class="abs" style="left:1309px;top:520px;width:7px;height:7px;background:rgb(187,194,193)"></div>
<div class="abs" style="left:1316px;top:520px;width:7px;height:7px;background:rgb(209,209,212)"></div>
<div class="abs" style="left:1323px;top:520px;width:7px;height:7px;background:rgb(214,212,214)"></div>
<div class="abs" style="left:1330px;top:520px;width:7px;height:7px;background:rgb(209,213,206)"></div>
<div class="abs" style="left:1337px;top:520px;width:7px;height:7px;background:rgb(199,198,199)"></div>
<div class="abs" style="left:1344px;top:520px;width:7px;height:7px;background:rgb(210,211,209)"></div>
<div class="abs" style="left:1351px;top:520px;width:7px;height:7px;background:rgb(193,196,194)"></div>
<div class="abs" style="left:1358px;top:520px;width:7px;height:7px;background:rgb(211,207,204)"></div>
<div class="abs" style="left:1365px;top:520px;width:7px;height:7px;background:rgb(194,191,196)"></div>
<div class="abs" style="left:1372px;top:520px;width:7px;height:7px;background:rgb(209,214,212)"></div>
<div class="abs" style="left:1379px;top:520px;width:7px;height:7px;background:rgb(198,196,202)"></div>
<div class="abs" style="left:1386px;top:520px;width:7px;height:7px;background:rgb(197,199,198)"></div>
<div class="abs" style="left:1393px;top:520px;width:7px;height:7px;background:rgb(195,188,191)"></div>
<div class="abs" style="left:1400px;top:520px;width:7px;height:7px;background:rgb(190,192,192)"></div>
<div class="abs" style="left:1407px;top:520px;width:7px;height:7px;background:rgb(198,198,203)"></div>
<div class="abs" style="left:1414px;top:520px;width:7px;height:7px;background:rgb(194,195,191)"></div>
<div class="abs" style="left:1421px;top:520px;width:7px;height:7px;background:rgb(204,197,198)"></div>
<div class="abs" style="left:1428px;top:520px;width:7px;height:7px;background:rgb(203,208,201)"></div>
<div class="abs" style="left:1435px;top:520px;width:7px;height:7px;background:rgb(201,201,199)"></div>
<div class="abs" style="left:1442px;top:520px;width:7px;height:7px;background:rgb(193,194,199)"></div>
<div class="abs" style="left:1449px;top:520px;width:7px;height:7px;background:rgb(208,211,206)"></div>
<div class="abs" style="left:1456px;top:520px;width:7px;height:7px;background:rgb(189,188,187)"></div>
<div class="abs" style="left:1463px;top:520px;width:7px;height:7px;background:rgb(208,208,209)"></div>
<div class="abs" style="left:1470px;top:520px;width:7px;height:7px;background:rgb(210,216,215)"></div>
<div class="abs" style="left:1477px;top:520px;width:7px;height:7px;background:rgb(211,211,211)"></div>
<div class="abs" style="left:1484px;top:520px;width:7px;height:7px;background:rgb(201,206,201)"></div>
<div class="abs" style="left:1491px;top:520px;width:7px;height:7px;background:rgb(215,212,215)"></div>
<div class="abs" style="left:1498px;top:520px;width:7px;height:7px;background:rgb(198,201,197)"></div>
<div class="abs" style="left:1288px;top:527px;width:7px;height:6px;background:rgb(247,245,246)"></div>
<div class="abs" style="left:1386px;top:527px;width:7px;height:6px;background:rgb(242,240,241)"></div>
<div class="abs" style="left:1421px;top:527px;width:7px;height:6px;background:rgb(243,242,243)"></div>
<div class="abs" style="left:1288px;top:555px;width:7px;height:7px;background:rgb(230,231,232)"></div>
<div class="abs" style="left:1295px;top:555px;width:7px;height:7px;background:rgb(233,233,227)"></div>
<div class="abs" style="left:1302px;top:555px;width:7px;height:7px;background:rgb(231,234,233)"></div>
<div class="abs" style="left:1309px;top:555px;width:7px;height:7px;background:rgb(228,225,228)"></div>
<div class="abs" style="left:1316px;top:555px;width:7px;height:7px;background:rgb(227,231,230)"></div>
<div class="abs" style="left:1323px;top:555px;width:7px;height:7px;background:rgb(217,215,216)"></div>
<div class="abs" style="left:1330px;top:555px;width:7px;height:7px;background:rgb(230,228,227)"></div>
<div class="abs" style="left:1337px;top:555px;width:7px;height:7px;background:rgb(224,223,221)"></div>
<div class="abs" style="left:1344px;top:555px;width:7px;height:7px;background:rgb(222,226,224)"></div>
<div class="abs" style="left:1351px;top:555px;width:7px;height:7px;background:rgb(230,231,226)"></div>
<div class="abs" style="left:1358px;top:555px;width:7px;height:7px;background:rgb(229,225,229)"></div>
<div class="abs" style="left:1365px;top:555px;width:7px;height:7px;background:rgb(228,224,223)"></div>
<div class="abs" style="left:1372px;top:555px;width:7px;height:7px;background:rgb(216,219,212)"></div>
<div class="abs" style="left:1379px;top:555px;width:7px;height:7px;background:rgb(214,213,213)"></div>
<div class="abs" style="left:1386px;top:555px;width:7px;height:7px;background:rgb(220,220,226)"></div>
<div class="abs" style="left:1393px;top:555px;width:7px;height:7px;background:rgb(223,221,221)"></div>
<div class="abs" style="left:1400px;top:555px;width:7px;height:7px;background:rgb(229,229,227)"></div>
<div class="abs" style="left:1407px;top:555px;width:7px;height:7px;background:rgb(236,235,232)"></div>
<div class="abs" style="left:1414px;top:555px;width:7px;height:7px;background:rgb(226,225,232)"></div>
<div class="abs" style="left:1421px;top:555px;width:7px;height:7px;background:rgb(228,227,223)"></div>
<div class="abs" style="left:1428px;top:555px;width:7px;height:7px;background:rgb(217,225,224)"></div>
<div class="abs" style="left:1435px;top:555px;width:7px;height:7px;background:rgb(222,227,227)"></div>
<div class="abs" style="left:1442px;top:555px;width:7px;height:7px;background:rgb(212,215,218)"></div>
<div class="abs" style="left:1449px;top:555px;width:7px;height:7px;background:rgb(224,226,224)"></div>
<div class="abs" style="left:1456px;top:555px;width:7px;height:7px;background:rgb(225,225,224)"></div>
<div class="abs" style="left:1463px;top:555px;width:7px;height:7px;background:rgb(216,215,215)"></div>
<div class="abs" style="left:1470px;top:555px;width:7px;height:7px;background:rgb(216,217,220)"></div>
<div class="abs" style="left:1477px;top:555px;width:7px;height:7px;background:rgb(221,224,225)"></div>
<div class="abs" style="left:1484px;top:555px;width:7px;height:7px;background:rgb(228,228,231)"></div>
<div class="abs" style="left:1491px;top:555px;width:7px;height:7px;background:rgb(211,214,218)"></div>
<div class="abs" style="left:1498px;top:555px;width:7px;height:7px;background:rgb(216,213,213)"></div>
<div class="abs" style="left:1505px;top:555px;width:7px;height:7px;background:rgb(219,219,217)"></div>
<div class="abs" style="left:1512px;top:555px;width:7px;height:7px;background:rgb(212,218,220)"></div>
<div class="abs" style="left:1519px;top:555px;width:7px;height:7px;background:rgb(221,223,227)"></div>
<div class="abs" style="left:1526px;top:555px;width:7px;height:7px;background:rgb(211,212,217)"></div>
<div class="abs" style="left:1533px;top:555px;width:7px;height:7px;background:rgb(211,214,219)"></div>
<div class="abs" style="left:1540px;top:555px;width:7px;height:7px;background:rgb(218,222,222)"></div>
<div class="abs" style="left:1547px;top:555px;width:7px;height:7px;background:rgb(219,216,212)"></div>
<div class="abs" style="left:1281px;top:562px;width:7px;height:7px;background:rgb(223,223,230)"></div>
<div class="abs" style="left:1288px;top:562px;width:7px;height:7px;background:rgb(216,216,219)"></div>
<div class="abs" style="left:1295px;top:562px;width:7px;height:7px;background:rgb(211,207,211)"></div>
<div class="abs" style="left:1302px;top:562px;width:7px;height:7px;background:rgb(221,221,218)"></div>
<div class="abs" style="left:1309px;top:562px;width:7px;height:7px;background:rgb(209,216,211)"></div>
<div class="abs" style="left:1316px;top:562px;width:7px;height:7px;background:rgb(210,207,208)"></div>
<div class="abs" style="left:1323px;top:562px;width:7px;height:7px;background:rgb(223,217,217)"></div>
<div class="abs" style="left:1330px;top:562px;width:7px;height:7px;background:rgb(225,224,224)"></div>
<div class="abs" style="left:1337px;top:562px;width:7px;height:7px;background:rgb(215,212,212)"></div>
<div class="abs" style="left:1344px;top:562px;width:7px;height:7px;background:rgb(203,204,207)"></div>
<div class="abs" style="left:1351px;top:562px;width:7px;height:7px;background:rgb(212,211,210)"></div>
<div class="abs" style="left:1358px;top:562px;width:7px;height:7px;background:rgb(211,218,218)"></div>
<div class="abs" style="left:1365px;top:562px;width:7px;height:7px;background:rgb(227,225,225)"></div>
<div class="abs" style="left:1372px;top:562px;width:7px;height:7px;background:rgb(209,213,211)"></div>
<div class="abs" style="left:1379px;top:562px;width:7px;height:7px;background:rgb(214,219,215)"></div>
<div class="abs" style="left:1386px;top:562px;width:7px;height:7px;background:rgb(208,211,210)"></div>
<div class="abs" style="left:1393px;top:562px;width:7px;height:7px;background:rgb(215,209,212)"></div>
<div class="abs" style="left:1400px;top:562px;width:7px;height:7px;background:rgb(225,231,225)"></div>
<div class="abs" style="left:1407px;top:562px;width:7px;height:7px;background:rgb(215,221,217)"></div>
<div class="abs" style="left:1414px;top:562px;width:7px;height:7px;background:rgb(214,212,212)"></div>
<div class="abs" style="left:1421px;top:562px;width:7px;height:7px;background:rgb(218,220,217)"></div>
<div class="abs" style="left:1428px;top:562px;width:7px;height:7px;background:rgb(226,227,227)"></div>
<div class="abs" style="left:1435px;top:562px;width:7px;height:7px;background:rgb(228,223,227)"></div>
<div class="abs" style="left:1442px;top:562px;width:7px;height:7px;background:rgb(218,220,219)"></div>
<div class="abs" style="left:1449px;top:562px;width:7px;height:7px;background:rgb(204,205,205)"></div>
<div class="abs" style="left:1456px;top:562px;width:7px;height:7px;background:rgb(219,221,216)"></div>
<div class="abs" style="left:1463px;top:562px;width:7px;height:7px;background:rgb(217,218,216)"></div>
<div class="abs" style="left:1470px;top:562px;width:7px;height:7px;background:rgb(214,212,208)"></div>
<div class="abs" style="left:1477px;top:562px;width:7px;height:7px;background:rgb(228,221,226)"></div>
<div class="abs" style="left:1484px;top:562px;width:7px;height:7px;background:rgb(213,212,211)"></div>
<div class="abs" style="left:1491px;top:562px;width:7px;height:7px;background:rgb(203,209,209)"></div>
<div class="abs" style="left:1498px;top:562px;width:7px;height:7px;background:rgb(216,212,210)"></div>
<div class="abs" style="left:1505px;top:562px;width:7px;height:7px;background:rgb(227,225,223)"></div>
<div class="abs" style="left:1512px;top:562px;width:7px;height:7px;background:rgb(228,224,227)"></div>
<div class="abs" style="left:1519px;top:562px;width:7px;height:7px;background:rgb(210,214,212)"></div>
<div class="abs" style="left:1526px;top:562px;width:7px;height:7px;background:rgb(221,217,221)"></div>
<div class="abs" style="left:1533px;top:562px;width:7px;height:7px;background:rgb(214,215,218)"></div>
<div class="abs" style="left:1540px;top:562px;width:7px;height:7px;background:rgb(206,207,209)"></div>
<div class="abs" style="left:1547px;top:562px;width:7px;height:7px;background:rgb(223,223,219)"></div>
<div class="abs" style="left:1295px;top:590px;width:7px;height:7px;background:rgb(241,238,241)"></div>
<div class="abs" style="left:1316px;top:590px;width:7px;height:7px;background:rgb(234,236,234)"></div>
<div class="abs" style="left:1323px;top:590px;width:7px;height:7px;background:rgb(237,245,241)"></div>
<div class="abs" style="left:1330px;top:590px;width:7px;height:7px;background:rgb(243,239,243)"></div>
<div class="abs" style="left:1393px;top:590px;width:7px;height:7px;background:rgb(236,228,229)"></div>
<div class="abs" style="left:1400px;top:590px;width:7px;height:7px;background:rgb(246,244,239)"></div>
<div class="abs" style="left:1449px;top:590px;width:7px;height:7px;background:rgb(240,233,233)"></div>
<div class="abs" style="left:1456px;top:590px;width:7px;height:7px;background:rgb(236,232,233)"></div>
<div class="abs" style="left:1281px;top:597px;width:7px;height:7px;background:rgb(198,197,203)"></div>
<div class="abs" style="left:1288px;top:597px;width:7px;height:7px;background:rgb(198,201,199)"></div>
<div class="abs" style="left:1295px;top:597px;width:7px;height:7px;background:rgb(205,206,212)"></div>
<div class="abs" style="left:1302px;top:597px;width:7px;height:7px;background:rgb(216,216,214)"></div>
<div class="abs" style="left:1309px;top:597px;width:7px;height:7px;background:rgb(204,198,202)"></div>
<div class="abs" style="left:1316px;top:597px;width:7px;height:7px;background:rgb(217,218,218)"></div>
<div class="abs" style="left:1323px;top:597px;width:7px;height:7px;background:rgb(210,211,215)"></div>
<div class="abs" style="left:1330px;top:597px;width:7px;height:7px;background:rgb(210,204,204)"></div>
<div class="abs" style="left:1337px;top:597px;width:7px;height:7px;background:rgb(204,201,205)"></div>
<div class="abs" style="left:1344px;top:597px;width:7px;height:7px;background:rgb(198,202,201)"></div>
<div class="abs" style="left:1351px;top:597px;width:7px;height:7px;background:rgb(195,193,194)"></div>
<div class="abs" style="left:1358px;top:597px;width:7px;height:7px;background:rgb(190,191,189)"></div>
<div class="abs" style="left:1365px;top:597px;width:7px;height:7px;background:rgb(197,190,197)"></div>
<div class="abs" style="left:1372px;top:597px;width:7px;height:7px;background:rgb(204,210,206)"></div>
<div class="abs" style="left:1379px;top:597px;width:7px;height:7px;background:rgb(210,209,203)"></div>
<div class="abs" style="left:1386px;top:597px;width:7px;height:7px;background:rgb(214,216,212)"></div>
<div class="abs" style="left:1393px;top:597px;width:7px;height:7px;background:rgb(211,205,208)"></div>
<div class="abs" style="left:1400px;top:597px;width:7px;height:7px;background:rgb(212,209,212)"></div>
<div class="abs" style="left:1407px;top:597px;width:7px;height:7px;background:rgb(208,212,215)"></div>
<div class="abs" style="left:1414px;top:597px;width:7px;height:7px;background:rgb(193,195,194)"></div>
<div class="abs" style="left:1421px;top:597px;width:7px;height:7px;background:rgb(193,193,187)"></div>
<div class="abs" style="left:1428px;top:597px;width:7px;height:7px;background:rgb(198,201,195)"></div>
<div class="abs" style="left:1435px;top:597px;width:7px;height:7px;background:rgb(201,203,204)"></div>
<div class="abs" style="left:1442px;top:597px;width:7px;height:7px;background:rgb(192,195,189)"></div>
<div class="abs" style="left:1449px;top:597px;width:7px;height:7px;background:rgb(204,206,207)"></div>
<div class="abs" style="left:1456px;top:597px;width:7px;height:7px;background:rgb(208,210,209)"></div>
<div class="abs" style="left:1463px;top:597px;width:7px;height:7px;background:rgb(206,209,202)"></div>
<div class="abs" style="left:1470px;top:597px;width:7px;height:7px;background:rgb(216,211,216)"></div>
<div class="abs" style="left:1477px;top:597px;width:7px;height:7px;background:rgb(203,202,203)"></div>
<div class="abs" style="left:1484px;top:597px;width:7px;height:7px;background:rgb(201,202,201)"></div>
<div class="abs" style="left:1491px;top:597px;width:7px;height:7px;background:rgb(217,217,215)"></div>
<div class="abs" style="left:1498px;top:597px;width:7px;height:7px;background:rgb(203,202,207)"></div>
<div class="abs" style="left:1505px;top:597px;width:7px;height:7px;background:rgb(196,197,192)"></div>
<div class="abs" style="left:1512px;top:597px;width:7px;height:7px;background:rgb(204,209,210)"></div>
<div class="abs" style="left:1519px;top:597px;width:7px;height:7px;background:rgb(208,207,207)"></div>
<div class="abs" style="left:1526px;top:597px;width:7px;height:7px;background:rgb(202,197,205)"></div>
<div class="abs" style="left:1533px;top:597px;width:7px;height:7px;background:rgb(191,198,196)"></div>
<div class="abs" style="left:1540px;top:597px;width:7px;height:7px;background:rgb(196,196,201)"></div>
<div class="abs" style="left:1547px;top:597px;width:7px;height:7px;background:rgb(211,204,204)"></div>
<div class="abs" style="left:1288px;top:604px;width:7px;height:7px;background:rgb(241,241,235)"></div>
<div class="abs" style="left:1386px;top:604px;width:7px;height:7px;background:rgb(231,227,229)"></div>
<div class="abs" style="left:240px;top:641px;width:1662px;height:1px;background:#dcdcdc;"></div>
<svg style="left:0;top:0" width="1917" height="648"><rect x="244.2" y="503.3" width="808.9" height="36.1" rx="1.5" fill="none" stroke="#e8212b" stroke-width="3.2"/></svg>
<svg style="left:0;top:0" width="1917" height="648"><g fill="#e8212b" stroke="#e8212b">
<path d="M191.2 367.2L151 317" stroke-width="3.4" fill="none" stroke-linecap="round"/>
<path d="M139.9 303.4L157.4 312.3L144.6 322Z" stroke="none"/>
<path d="M645.6 436.6L629 481" stroke-width="3.2" fill="none" stroke-linecap="round"/>
<path d="M622.3 496.6L621.2 476.8L636.7 482.4Z" stroke="none"/>
</g></svg>
<div class="t" style="left:98px;top:268px;font-size:16px;color:#000;font-weight:bold;letter-spacing:.35px;">OSS Bucket Name</div>
<div class="t" style="left:655px;top:436px;font-size:16px;color:#000;font-weight:bold;">OSS Endpoint</div>
</body></html>
